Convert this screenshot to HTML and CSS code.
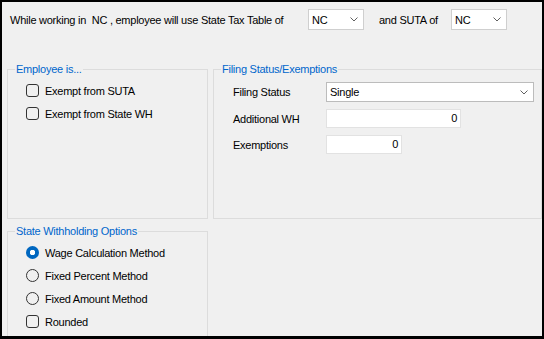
FILE: index.html
```html
<!DOCTYPE html>
<html lang="en">
<head>
    <meta charset="UTF-8">
    <title>State Tax Settings</title>
    <link rel="stylesheet" href="styles.css">
</head>
<body>
    <div class="window">
        <!-- state table selection -->
        <div class="header">
            <span class="lead">While working in&nbsp; NC , employee will use State Tax Table of</span>
            <div class="combo small"><span>NC</span><svg width="8" height="5" viewBox="0 0 8 5"><polyline points="0.5,0.5 4,4 7.5,0.5" /></svg></div>
            <span class="mid">and SUTA of</span>
            <div class="combo small"><span>NC</span><svg width="8" height="5" viewBox="0 0 8 5"><polyline points="0.5,0.5 4,4 7.5,0.5" /></svg></div>
        </div>

        <div class="groups">
            <fieldset class="group">
                <legend>Employee is...</legend>
                <div class="opt"><span class="check"></span>Exempt from SUTA</div>
                <div class="opt"><span class="check"></span>Exempt from State WH</div>
            </fieldset>

            <fieldset class="group filing">
                <legend>Filing Status/Exemptions</legend>
                <div class="field">
                    <span class="lbl">Filing Status</span>
                    <div class="combo wide"><span>Single</span><svg width="8" height="5" viewBox="0 0 8 5"><polyline points="0.5,0.5 4,4 7.5,0.5" /></svg></div>
                </div>
                <div class="field">
                    <span class="lbl">Additional WH</span>
                    <div class="textbox addl">0</div>
                </div>
                <div class="field">
                    <span class="lbl">Exemptions</span>
                    <div class="textbox exempt">0</div>
                </div>
            </fieldset>

            <fieldset class="group">
                <legend>State Withholding Options</legend>
                <div class="opt"><span class="radio on"></span>Wage Calculation Method</div>
                <div class="opt"><span class="radio"></span>Fixed Percent Method</div>
                <div class="opt"><span class="radio"></span>Fixed Amount Method</div>
                <div class="opt"><span class="check"></span>Rounded</div>
            </fieldset>
        </div>
    </div>
</body>
</html>
```

FILE: styles.css
```css
body {
    margin: 0;
    font-family: "Liberation Sans", Arial, sans-serif;
    font-size: 11px;
    letter-spacing: -0.25px;
    color: #000;
}
.window {
    width: 544px;
    height: 339px;
    box-sizing: border-box;
    border: 2px solid #000;
    border-bottom-width: 3px;
    background-color: #f0f0f0;
    overflow: hidden;
}
.header {
    display: flex;
    align-items: center;
    height: 21px;
    padding: 7px 0 0 8px;
}
.lead {
    width: 298px;
}
.mid {
    width: 72px;
    margin-left: 15px;
}
.combo {
    box-sizing: border-box;
    height: 21px;
    background-color: #fff;
    border: 1px solid #cfcfcf;
    display: flex;
    align-items: center;
    justify-content: space-between;
    padding: 0 5px 0 3px;
}
.combo svg polyline {
    fill: none;
    stroke: #606060;
    stroke-width: 1;
}
.combo.small {
    width: 56px;
}
.combo.wide {
    width: 208px;
    height: 20px;
    border-color: #bcbcbc;
}
.groups {
    display: grid;
    grid-template-columns: 201px 329px;
    grid-template-rows: 157px 120px;
    gap: 5px;
    margin: 32px 0 0 5px;
}
.group {
    margin: 0;
    padding: 3px 0 0 7px;
    border: 1px solid #dcdcdc;
    min-width: 0;
}
.group legend {
    color: #0066cc;
    padding: 0 1px;
    line-height: 14px;
}
.opt {
    display: flex;
    align-items: center;
    gap: 6px;
    height: 23px;
    margin-left: 11px;
}
.check, .radio {
    width: 13px;
    height: 13px;
    box-sizing: border-box;
    border: 1px solid #333;
    border-radius: 3px;
    flex-shrink: 0;
}
.radio {
    border-radius: 50%;
}
.radio.on {
    border: none;
    background: radial-gradient(circle, #fff 0 2.5px, #0067c0 3px);
}
.filing {
    padding-top: 6px;
}
.field {
    display: flex;
    align-items: center;
    margin: 0 0 7px 12px;
}
.lbl {
    width: 93px;
}
.textbox {
    box-sizing: border-box;
    height: 19px;
    line-height: 17px;
    background-color: #fff;
    border: 1px solid #e2e2e2;
    text-align: right;
    padding-right: 3px;
}
.textbox.addl {
    width: 135px;
}
.textbox.exempt {
    width: 76px;
}
```
